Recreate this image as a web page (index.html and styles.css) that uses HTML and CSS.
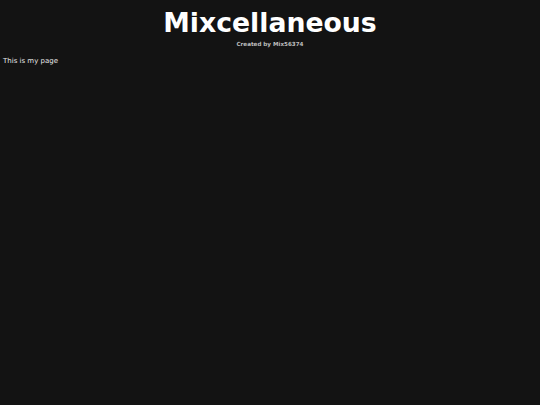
FILE: index.html
```html
<!DOCTYPE html>
<html>
<head>
<meta charset="utf-8">
<link rel="stylesheet" href="styles.css">
</head>
<body>
<header class="header">
  <h1 class="title">Mixcellaneous</h1>
  <p class="subtitle">Created by Mix56374</p>
</header>
<p class="content">This is my page</p>
</body>
</html>
```
FILE: styles.css
```css
html, body {
  margin: 0;
  padding: 0;
  background: #131313;
  height: 100%;
}
body {
  font-family: "DejaVu Sans", Verdana, sans-serif;
  color: #e6e6e6;
  padding: 0 3px;
}
.header {
  text-align: center;
  padding-top: 7px;
}
.title {
  margin: 0;
  font-size: 26.7px;
  line-height: 32px;
  font-weight: bold;
  color: #ffffff;
}
.subtitle {
  margin: 0;
  font-size: 5.6px;
  line-height: 10px;
  font-weight: bold;
  color: #bdbdbd;
}
.content {
  margin: 7px 0 0;
  font-size: 7px;
  line-height: 10px;
}
```
